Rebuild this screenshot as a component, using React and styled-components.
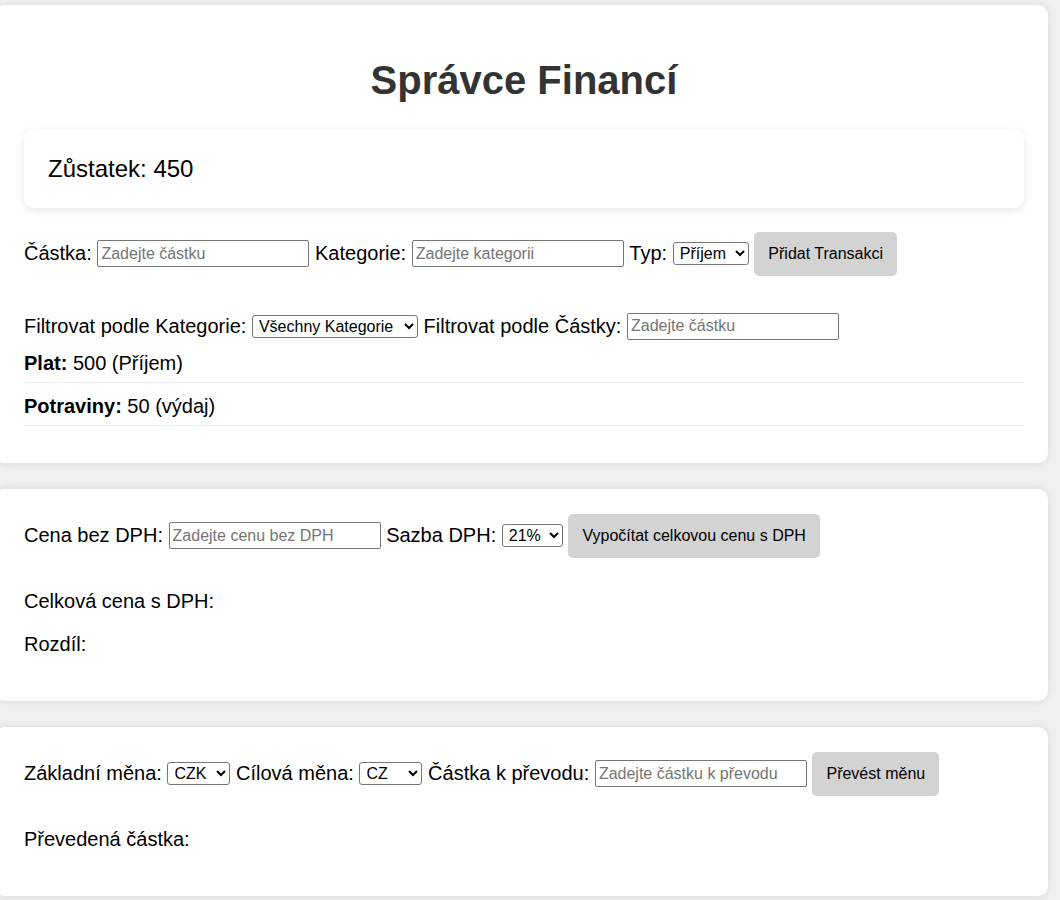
import React from "react";
import styled, { createGlobalStyle } from "styled-components";

const Global = createGlobalStyle`
  html, body {
    margin: 0;
    padding: 0;
    background: #f0f0f0;
    font-family: "Liberation Sans", Arial, sans-serif;
    font-size: 20px;
    color: #000;
  }
`;

const Page = styled.div`
  padding-top: 5px;
  margin-left: -5px;
  width: 1053px;
`;

const Card = styled.section`
  background: #fff;
  border-radius: 10px;
  box-shadow: 0 0 10px rgba(0, 0, 0, 0.1);
  padding: 25px 24px 25px 29px;
  margin-bottom: 26px;
`;

const Title = styled.h1`
  margin: 26.8px 0;
  font-size: 40px;
  line-height: 46px;
  font-weight: 700;
  color: #333;
  text-align: center;
`;

const Balance = styled.div`
  background: #fff;
  border-radius: 10px;
  box-shadow: 0 2px 8px rgba(0, 0, 0, 0.1);
  padding: 25px 24px;
  font-size: 24px;
  line-height: 28px;
  margin-bottom: 24px;
`;

const Row = styled.div`
  display: flex;
  align-items: center;
  gap: 5.6px;
  line-height: 23px;
  margin-bottom: ${(p) => p.$mb || 0}px;
`;

const Label = styled.span`
  white-space: nowrap;
`;

const Input = styled.input`
  box-sizing: border-box;
  width: 212px;
  height: 27px;
  border: 1px solid #767676;
  border-radius: 2px;
  padding: 0 3px;
  font-family: "Liberation Sans", Arial, sans-serif;
  font-size: 16px;
  color: #000;
  background: #fff;
  &::placeholder {
    color: #757575;
  }
`;

const Select = styled.select`
  box-sizing: border-box;
  width: ${(p) => p.$w}px;
  height: 23px;
  border: 1px solid #767676;
  border-radius: 3px;
  background: #fff;
  font-family: "Liberation Sans", Arial, sans-serif;
  font-size: 16px;
  color: #000;
  padding: 0 0 0 2px;
`;

const Button = styled.button`
  height: 44px;
  padding: 0 14px;
  border: none;
  border-radius: 5px;
  background: #d3d3d3;
  font-family: "Liberation Sans", Arial, sans-serif;
  font-size: 16px;
  color: #000;
  cursor: pointer;
`;

const List = styled.ul`
  list-style: none;
  margin: 0 0 12px;
  padding: 0;
`;

const Item = styled.li`
  padding: 12px 0 7px;
  line-height: 23px;
  border-bottom: 1px solid #eee;
`;

const Result = styled.p`
  margin: 20px 0;
  line-height: 23px;
`;

const Spacer = styled.div`
  height: 12px;
`;

export default function App() {
  return (
    <>
      <Global />
      <Page>
        <Card>
          <Title>Správce Financí</Title>
          <Balance>Zůstatek: 450</Balance>
          <Row $mb={37}>
            <Label>Částka:</Label>
            <Input type="number" placeholder="Zadejte částku" />
            <Label>Kategorie:</Label>
            <Input type="text" placeholder="Zadejte kategorii" />
            <Label>Typ:</Label>
            <Select $w={76} defaultValue="prijem">
              <option value="prijem">Příjem</option>
              <option value="vydaj">Výdaj</option>
            </Select>
            <Button>Přidat Transakci</Button>
          </Row>
          <Row>
            <Label>Filtrovat podle Kategorie:</Label>
            <Select $w={166} defaultValue="all">
              <option value="all">Všechny Kategorie</option>
              <option value="plat">Plat</option>
              <option value="potraviny">Potraviny</option>
            </Select>
            <Label>Filtrovat podle Částky:</Label>
            <Input type="number" placeholder="Zadejte částku" />
          </Row>
          <List>
            <Item>
              <strong>Plat:</strong> 500 (Příjem)
            </Item>
            <Item>
              <strong>Potraviny:</strong> 50 (výdaj)
            </Item>
          </List>
        </Card>

        <Card>
          <Row>
            <Label>Cena bez DPH:</Label>
            <Input type="number" placeholder="Zadejte cenu bez DPH" />
            <Label>Sazba DPH:</Label>
            <Select $w={61} defaultValue="21">
              <option value="21">21%</option>
              <option value="12">12%</option>
              <option value="0">0%</option>
            </Select>
            <Button>Vypočítat celkovou cenu s DPH</Button>
          </Row>
          <Spacer />
          <Result>Celková cena s DPH: </Result>
          <Result>Rozdíl: </Result>
        </Card>

        <Card>
          <Row>
            <Label>Základní měna:</Label>
            <Select $w={63} defaultValue="CZK">
              <option value="CZK">CZK</option>
              <option value="EUR">EUR</option>
              <option value="USD">USD</option>
            </Select>
            <Label>Cílová měna:</Label>
            <Select $w={63} defaultValue="CZ">
              <option value="CZ">CZ</option>
              <option value="EUR">EUR</option>
              <option value="USD">USD</option>
            </Select>
            <Label>Částka k převodu:</Label>
            <Input type="number" placeholder="Zadejte částku k převodu" />
            <Button>Převést měnu</Button>
          </Row>
          <Spacer />
          <Result>Převedená částka: </Result>
        </Card>
      </Page>
    </>
  );
}
